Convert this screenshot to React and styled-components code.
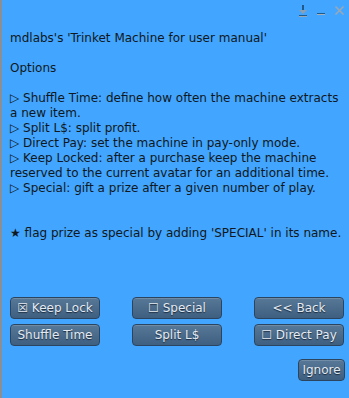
import React from "react";
import styled, { createGlobalStyle } from "styled-components";

const Global = createGlobalStyle`
  html, body { margin: 0; padding: 0; }
  body { width: 349px; height: 398px; overflow: hidden; background: #42a5ff; }
`;

const Window = styled.div`
  box-sizing: border-box;
  width: 349px;
  height: 398px;
  background: #42a5ff;
  border-left: 2px solid #8a8f96;
  font-family: "DejaVu Sans", sans-serif;
  color: #111820;
  display: flex;
  flex-direction: column;
`;

const TitleBar = styled.div`
  height: 20px;
  display: flex;
  justify-content: flex-end;
  align-items: center;
  gap: 6px;
  padding: 2px 4px 0 0;
  box-sizing: border-box;
`;

const IconBox = styled.div`
  width: 12px;
  height: 14px;
  display: flex;
  align-items: center;
  justify-content: center;
`;

const Body = styled.div`
  padding: 11px 0 0 8px;
  font-size: 12px;
  line-height: 15px;
  white-space: pre-wrap;
  height: 266px;
`;

const Line = styled.div`
  min-height: 15px;
`;

const Grid = styled.div`
  display: grid;
  grid-template-columns: repeat(3, 90px);
  column-gap: 32px;
  row-gap: 5px;
  padding-left: 8px;
`;

const Button = styled.button`
  box-sizing: border-box;
  height: 22px;
  width: ${(p) => (p.$w ? p.$w + "px" : "auto")};
  padding: 0;
  border: 1px solid #2b4561;
  border-radius: 4px;
  background: linear-gradient(#587898, #3f5f80);
  box-shadow: inset 0 1px 0 rgba(255, 255, 255, 0.15);
  color: #e4ebf2;
  text-shadow: 0 1px 1px #1a2a3c;
  font-family: "DejaVu Sans", sans-serif;
  font-size: 12px;
  display: flex;
  align-items: center;
  justify-content: center;
  white-space: pre;
`;

const Footer = styled.div`
  display: flex;
  justify-content: flex-end;
  padding: 13px 4px 0 0;
`;

const lines = [
  "mdlabs's 'Trinket Machine for user manual'",
  "",
  "Options",
  "",
  "\u25B7 Shuffle Time: define how often the machine extracts",
  "a new item.",
  "\u25B7 Split L$: split profit.",
  "\u25B7 Direct Pay: set the machine in pay-only mode.",
  "\u25B7 Keep Locked: after a purchase keep the machine",
  "reserved to the current avatar for an additional time.",
  "\u25B7 Special: gift a prize after a given number of play.",
  "",
  "",
  "\u2605 flag prize as special by adding 'SPECIAL' in its name.",
];

export default function App() {
  return (
    <>
      <Global />
      <Window>
        <TitleBar>
          <IconBox>
            <svg width="10" height="14" viewBox="0 0 10 14">
              <rect x="4" y="1" width="2" height="5" fill="#1f5a8a" />
              <path d="M1 6 H9 L5 10 Z" fill="#8aa0b4" />
              <rect x="1" y="11" width="8" height="2" fill="#1f5a8a" />
              <rect x="1" y="12" width="8" height="1" fill="#9aa8b4" />
            </svg>
          </IconBox>
          <IconBox>
            <svg width="10" height="14" viewBox="0 0 10 14">
              <rect x="1" y="9" width="8" height="1" fill="#1f5a8a" />
              <rect x="1" y="10" width="8" height="1" fill="#a8b0b8" />
            </svg>
          </IconBox>
          <IconBox>
            <svg width="11" height="14" viewBox="0 0 11 14">
              <path d="M1.5 2.5 L9.5 10.5 M9.5 2.5 L1.5 10.5" stroke="#9aa8b6" strokeWidth="1.6" />
            </svg>
          </IconBox>
        </TitleBar>
        <Body>
          {lines.map((l, i) => (
            <Line key={i}>{l}</Line>
          ))}
        </Body>
        <Grid>
          <Button>{"\u2612 Keep Lock"}</Button>
          <Button>{"\u2610 Special"}</Button>
          <Button>&lt;&lt; Back</Button>
          <Button>Shuffle Time</Button>
          <Button>Split L$</Button>
          <Button>{"\u2610 Direct Pay"}</Button>
        </Grid>
        <Footer>
          <Button $w={47}>Ignore</Button>
        </Footer>
      </Window>
    </>
  );
}
